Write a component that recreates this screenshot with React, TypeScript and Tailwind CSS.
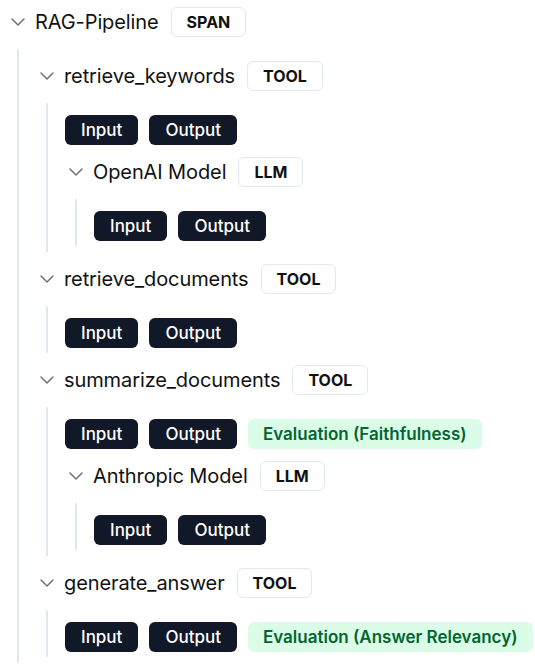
import { ChevronDown } from 'lucide-react'

type Span = {
  name: string
  kind: string
  evaluation?: string
  children?: Span[]
}

const TRACE: Span = {
  name: 'RAG-Pipeline',
  kind: 'SPAN',
  children: [
    {
      name: 'retrieve_keywords',
      kind: 'TOOL',
      children: [{ name: 'OpenAI Model', kind: 'LLM' }],
    },
    { name: 'retrieve_documents', kind: 'TOOL' },
    {
      name: 'summarize_documents',
      kind: 'TOOL',
      evaluation: 'Evaluation (Faithfulness)',
      children: [{ name: 'Anthropic Model', kind: 'LLM' }],
    },
    { name: 'generate_answer', kind: 'TOOL', evaluation: 'Evaluation (Answer Relevancy)' },
  ],
}

export default function App() {
  return (
    <div className="min-h-screen bg-white pl-[6px] pt-[7px] font-['Inter',sans-serif] text-[#111111]">
      <SpanNode span={TRACE} root />
    </div>
  )
}

function SpanNode({ span, root = false }: { span: Span; root?: boolean }) {
  const leaf = !span.children || span.children.length === 0
  return (
    <div className="flex flex-col">
      <div className="flex h-[30px] items-center">
        <ChevronDown size={24} strokeWidth={1.5} className="shrink-0 text-gray-500" />
        <span className="ml-[5px] whitespace-nowrap text-[20px] leading-none tracking-[-0.1px]">{span.name}</span>
        <span className="ml-3 flex h-[30px] items-center rounded-md border border-slate-200 px-[15px] text-base font-bold leading-none">
          {span.kind}
        </span>
      </div>
      <div
        className={`ml-[11px] mt-3 flex flex-col gap-3 border-l-2 border-slate-200 pl-4 pt-3 ${leaf ? 'pb-[5px]' : 'pb-[6px]'}`}
      >
        {root ? (
          span.children?.map(c => <SpanNode key={c.name} span={c} />)
        ) : (
          <>
            <div className="flex items-center gap-[11px] pl-[1px]">
              <IoButton label="Input" />
              <IoButton label="Output" />
              {span.evaluation && (
                <span className="flex h-[30px] items-center whitespace-nowrap rounded-md bg-green-100 px-[15px] text-[17px] font-semibold leading-none text-green-800">
                  {span.evaluation}
                </span>
              )}
            </div>
            {span.children?.map(c => <SpanNode key={c.name} span={c} />)}
          </>
        )}
      </div>
    </div>
  )
}

function IoButton({ label }: { label: string }) {
  return (
    <span className="flex h-[30px] items-center rounded-md bg-[#111827] px-4 text-[17px] font-medium leading-none text-white">
      {label}
    </span>
  )
}
